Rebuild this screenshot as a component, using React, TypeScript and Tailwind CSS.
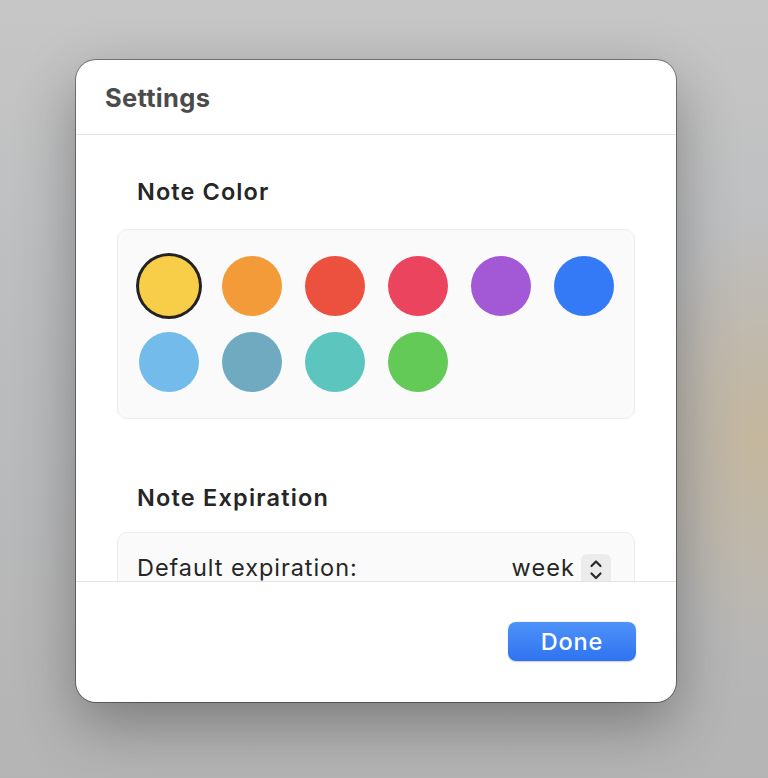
import React from 'react';

const colors = [
  '#f8cd48',
  '#f29b38',
  '#ec513f',
  '#ea445e',
  '#a358d6',
  '#3479f6',
  '#73bbeb',
  '#6faac0',
  '#5cc5be',
  '#63c957',
];

const Swatch = ({ color, selected }: { color: string; selected: boolean }) => (
  <button
    className={`w-[60px] h-[60px] rounded-full ${selected ? 'ring-[3px] ring-[#222222]' : ''}`}
    style={{ backgroundColor: color }}
    aria-label={color}
  />
);

const Stepper = () => (
  <div className="w-[30px] h-[32px] rounded-[6px] bg-[#ececec] flex items-start justify-center pt-[4px]">
    <svg width="14" height="24" viewBox="0 0 14 24" fill="none" stroke="#2a2a2a" strokeWidth="2.2" strokeLinecap="round" strokeLinejoin="round">
      <path d="M2.5 8 L7 3.5 L11.5 8" />
      <path d="M2.5 15.5 L7 20 L11.5 15.5" />
    </svg>
  </div>
);

export default function App() {
  const selected = 0;

  return (
    <div
      className="w-full h-[778px] overflow-hidden pt-[60px] pl-[76px] bg-[radial-gradient(ellipse_120px_220px_at_760px_440px,#c4b69c_0%,rgba(196,182,156,0)_100%),linear-gradient(180deg,#c6c6c6_0%,#bcbdbf_40%,#b4b4b4_100%)]"
      style={{ fontFamily: 'Inter, "Liberation Sans", sans-serif' }}
    >
      <div className="w-[600px] h-[642px] rounded-[20px] bg-white flex flex-col overflow-hidden shadow-[0_0_0_1px_rgba(0,0,0,0.38),0_22px_60px_rgba(0,0,0,0.32)]">
        {/* Header */}
        <div className="h-[75px] shrink-0 border-b-[1.5px] border-[#e4e4e4] flex items-center pl-[29px] pt-[2px]">
          <h1 className="text-[25.5px] font-bold text-[#4b4b4b] tracking-[0.3px]">Settings</h1>
        </div>

        {/* Scrollable content */}
        <div className="flex-1 overflow-hidden px-[41px]">
          <h2 className="mt-[43px] pl-[20px] text-[23.5px] leading-[28px] font-semibold tracking-[1.1px] text-[#262626]">
            Note Color
          </h2>
          <div className="mt-[23px] h-[190px] rounded-[10px] bg-[#fafafa] border border-[#ececec] pt-[26px] pl-[21px]">
            <div className="grid grid-cols-[repeat(6,60px)] gap-x-[23px] gap-y-[16px]">
              {colors.map((c, i) => (
                <Swatch key={c} color={c} selected={i === selected} />
              ))}
            </div>
          </div>

          <h2 className="mt-[65px] pl-[20px] text-[23.5px] leading-[28px] font-semibold tracking-[1.2px] text-[#262626]">
            Note Expiration
          </h2>
          <div className="mt-[20px] h-[90px] rounded-[10px] bg-[#fafafa] border border-[#ececec] pt-[21px] pl-[19px] pr-[23px]">
            <div className="flex items-start justify-between">
              <span className="text-[23.5px] leading-[28px] tracking-[0.95px] text-[#262626]">Default expiration:</span>
              <div className="flex items-start gap-[6px]">
                <span className="text-[23.5px] leading-[28px] tracking-[1.1px] text-[#262626]">week</span>
                <Stepper />
              </div>
            </div>
          </div>
        </div>

        {/* Footer */}
        <div className="h-[121px] shrink-0 border-t-[1.5px] border-[#e4e4e4] flex items-start justify-end pr-[40px] pt-[40px]">
          <button className="w-[128px] h-[39px] rounded-[8px] bg-[linear-gradient(180deg,#4e92f9_0%,#2f73f1_100%)] text-white text-[23.5px] leading-[28px] font-medium tracking-[0.8px] shadow-[0_0.5px_1.5px_rgba(0,0,0,0.2)]">
            Done
          </button>
        </div>
      </div>
    </div>
  );
}
